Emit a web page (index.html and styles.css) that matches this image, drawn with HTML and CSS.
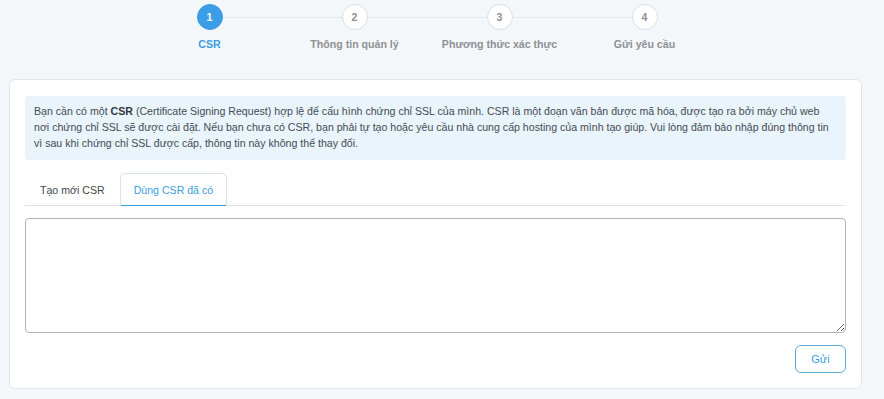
FILE: index.html
```html
<!DOCTYPE html>
<html lang="vi">

<head>
  <meta charset="UTF-8">
  <meta name="viewport" content="width=device-width,initial-scale=1.0">
  <title>CSR</title>
  <link rel="stylesheet" href="styles.css">
</head>

<body>
  <div class="page">
    <div class="stepper">
      <div class="step active">
        <div class="step-num">1</div>
        <div class="step-label">CSR</div>
      </div>
      <div class="step">
        <div class="step-num">2</div>
        <div class="step-label">Thông tin quản lý</div>
      </div>
      <div class="step">
        <div class="step-num">3</div>
        <div class="step-label">Phương thức xác thực</div>
      </div>
      <div class="step">
        <div class="step-num">4</div>
        <div class="step-label">Gửi yêu cầu</div>
      </div>
    </div>

    <div class="card">
      <div class="notice">
        Bạn cần có một <b>CSR</b> (Certificate Signing Request) hợp lệ để cấu hình chứng chỉ SSL của mình. CSR là một đoạn văn bản được mã hóa, được tạo ra bởi máy chủ web nơi chứng chỉ SSL sẽ được cài đặt. Nếu bạn chưa có CSR, bạn phải tự tạo hoặc yêu cầu nhà cung cấp hosting của mình tạo giúp. Vui lòng đảm bảo nhập đúng thông tin vì sau khi chứng chỉ SSL được cấp, thông tin này không thể thay đổi.
      </div>

      <div class="tabs">
        <div class="tab">Tạo mới CSR</div>
        <div class="tab active">Dùng CSR đã có</div>
      </div>

      <textarea class="csr-input"></textarea>

      <div class="actions">
        <button class="btn-send">Gửi</button>
      </div>
    </div>
  </div>
</body>

</html>
```

FILE: styles.css
```css
body {
  margin: 0;
  padding: 0;
  background: #f4f7fa;
  font-family: "Liberation Sans", Arial, sans-serif;
  color: #4a4f55;
}

.page {
  padding: 0 22px 0 9px;
}

/* ---------- stepper ---------- */
.stepper {
  display: flex;
  margin-left: 128px;
  padding-top: 4px;
  margin-bottom: 28px;
}

.step {
  position: relative;
  width: 145px;
  display: flex;
  flex-direction: column;
  align-items: center;
}

.step:not(:last-child)::after {
  content: "";
  position: absolute;
  top: 13px;
  left: calc(50% + 13px);
  width: 119px;
  height: 1px;
  background: #e2e7ec;
}

.step-num {
  width: 24px;
  height: 24px;
  border: 1px solid #dadfe4;
  border-radius: 50%;
  background: #fff;
  color: #8c9197;
  font-size: 10.6px;
  font-weight: bold;
  display: flex;
  align-items: center;
  justify-content: center;
}

.step-label {
  margin-top: 7px;
  font-size: 10.6px;
  line-height: 14px;
  font-weight: bold;
  color: #8c9197;
  white-space: nowrap;
}

.step.active .step-num {
  background: #3a9de6;
  border-color: #3a9de6;
  color: #fff;
}

.step.active .step-label {
  color: #3a9de6;
}

/* ---------- card ---------- */
.card {
  background: #fff;
  border: 1px solid #e1e5ea;
  border-radius: 6px;
  padding: 16px 15px 15px;
}

.notice {
  background: #e9f4fd;
  border-radius: 4px;
  padding: 7px 9px 9px;
  font-size: 10.6px;
  line-height: 16px;
  color: #464b51;
}

.notice b {
  color: #33373c;
}

.tabs {
  display: flex;
  margin-top: 13px;
  border-bottom: 1px solid #dfe3e7;
}

.tab {
  height: 31px;
  padding: 0 14px;
  border: 1px solid transparent;
  border-bottom: none;
  font-size: 10.6px;
  color: #43474c;
  display: flex;
  align-items: center;
}

.tab.active {
  padding: 0 13px;
  color: #3a9de0;
  border-color: #dde2e6;
  border-radius: 5px 5px 0 0;
  box-shadow: inset 0 -1px 0 #3a9de0;
  margin-bottom: -1px;
  height: 32px;
}

.csr-input {
  display: block;
  box-sizing: border-box;
  width: 100%;
  height: 115px;
  margin-top: 12px;
  border: 1px solid #b3b3b3;
  border-radius: 4px;
  padding: 6px;
  font-family: "Liberation Mono", monospace;
  font-size: 11px;
  resize: vertical;
}

.actions {
  display: flex;
  justify-content: flex-end;
  margin-top: 12px;
}

.btn-send {
  width: 51px;
  height: 28px;
  border: 1px solid #5eaad8;
  border-radius: 6px;
  background: #fff;
  color: #3a9de0;
  font-family: "Liberation Sans", Arial, sans-serif;
  font-size: 11px;
  cursor: pointer;
}
```
